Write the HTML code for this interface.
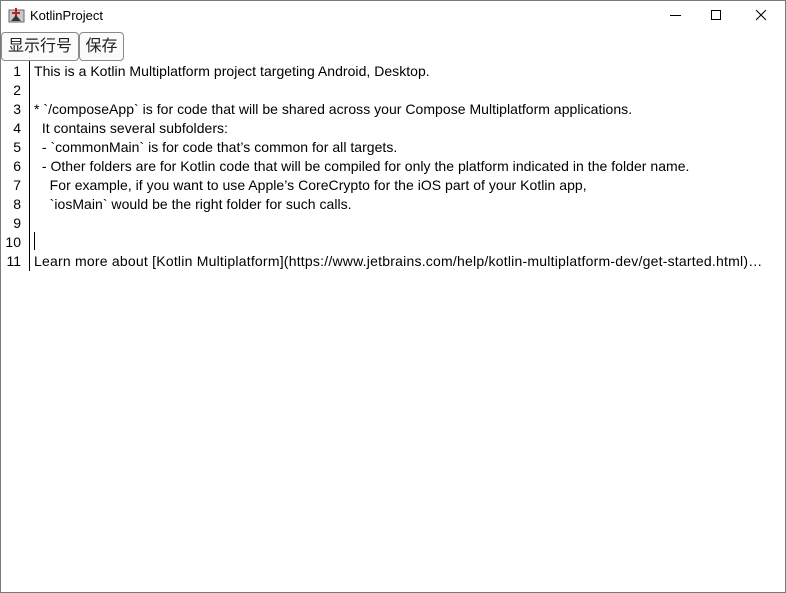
<!DOCTYPE html>
<html><head><meta charset="utf-8"><style>
*{margin:0;padding:0;box-sizing:border-box}
body{width:786px;height:593px;overflow:hidden;background:#fff;font-family:"Liberation Sans","Noto Sans CJK SC",sans-serif;position:relative}
.win{position:absolute;left:0;top:0;width:786px;height:593px;border:1px solid #7a7a7a}
.title{position:absolute;left:30px;top:8px;font-size:13px;color:#000}
.btn{position:absolute;top:32px;height:29px;border:1px solid #8a8a8a;border-radius:4px;background:#fbfbfb;font-size:16px;line-height:27px;text-align:center;color:#222}
.gut{position:absolute;left:29px;top:61px;width:1px;height:210px;background:#000}
.ln{position:absolute;left:0;width:21px;text-align:right;font-size:14px;color:#000}
.tx{position:absolute;left:34px;font-size:14px;color:#000;white-space:pre;letter-spacing:0.03px}
</style></head><body>
<div class="win"></div>
<svg style="position:absolute;left:8px;top:7px" width="17" height="17"><rect x="1" y="3" width="15" height="12" fill="#c9c9c9" stroke="#666"/><path d="M8 1 L8 9 M4 6 L12 6" stroke="#b22" stroke-width="2"/><path d="M3 14 L8 8 L13 14Z" fill="#334"/></svg>
<div class="title">KotlinProject</div>
<svg style="position:absolute;left:660px;top:8px" width="116" height="16"><path d="M10 7.5 H21" stroke="#000"/><rect x="51.5" y="2.5" width="9" height="9" fill="none" stroke="#000"/><path d="M96 2 L106 12 M106 2 L96 12" stroke="#000"/></svg>
<div class="btn" style="left:1px;width:78px">显示行号</div>
<div class="btn" style="left:79px;width:45px">保存</div>
<div class="gut"></div>
<div style="position:absolute;left:34px;top:232px;width:1px;height:18px;background:#000"></div>
<div class="ln" style="top:63px">1</div><div class="tx" style="top:63px">This is a Kotlin Multiplatform project targeting Android, Desktop.</div>
<div class="ln" style="top:82px">2</div>
<div class="ln" style="top:101px">3</div><div class="tx" style="top:101px">* `/composeApp` is for code that will be shared across your Compose Multiplatform applications.</div>
<div class="ln" style="top:120px">4</div><div class="tx" style="top:120px">  It contains several subfolders:</div>
<div class="ln" style="top:139px">5</div><div class="tx" style="top:139px">  - `commonMain` is for code that’s common for all targets.</div>
<div class="ln" style="top:158px">6</div><div class="tx" style="top:158px">  - Other folders are for Kotlin code that will be compiled for only the platform indicated in the folder name.</div>
<div class="ln" style="top:177px">7</div><div class="tx" style="top:177px">    For example, if you want to use Apple’s CoreCrypto for the iOS part of your Kotlin app,</div>
<div class="ln" style="top:196px">8</div><div class="tx" style="top:196px">    `iosMain` would be the right folder for such calls.</div>
<div class="ln" style="top:215px">9</div>
<div class="ln" style="top:234px">10</div>
<div class="ln" style="top:253px">11</div><div class="tx" style="top:253px;letter-spacing:0.22px">Learn more about [Kotlin Multiplatform](https://www.jetbrains.com/help/kotlin-multiplatform-dev/get-started.html)…</div>
</body></html>
